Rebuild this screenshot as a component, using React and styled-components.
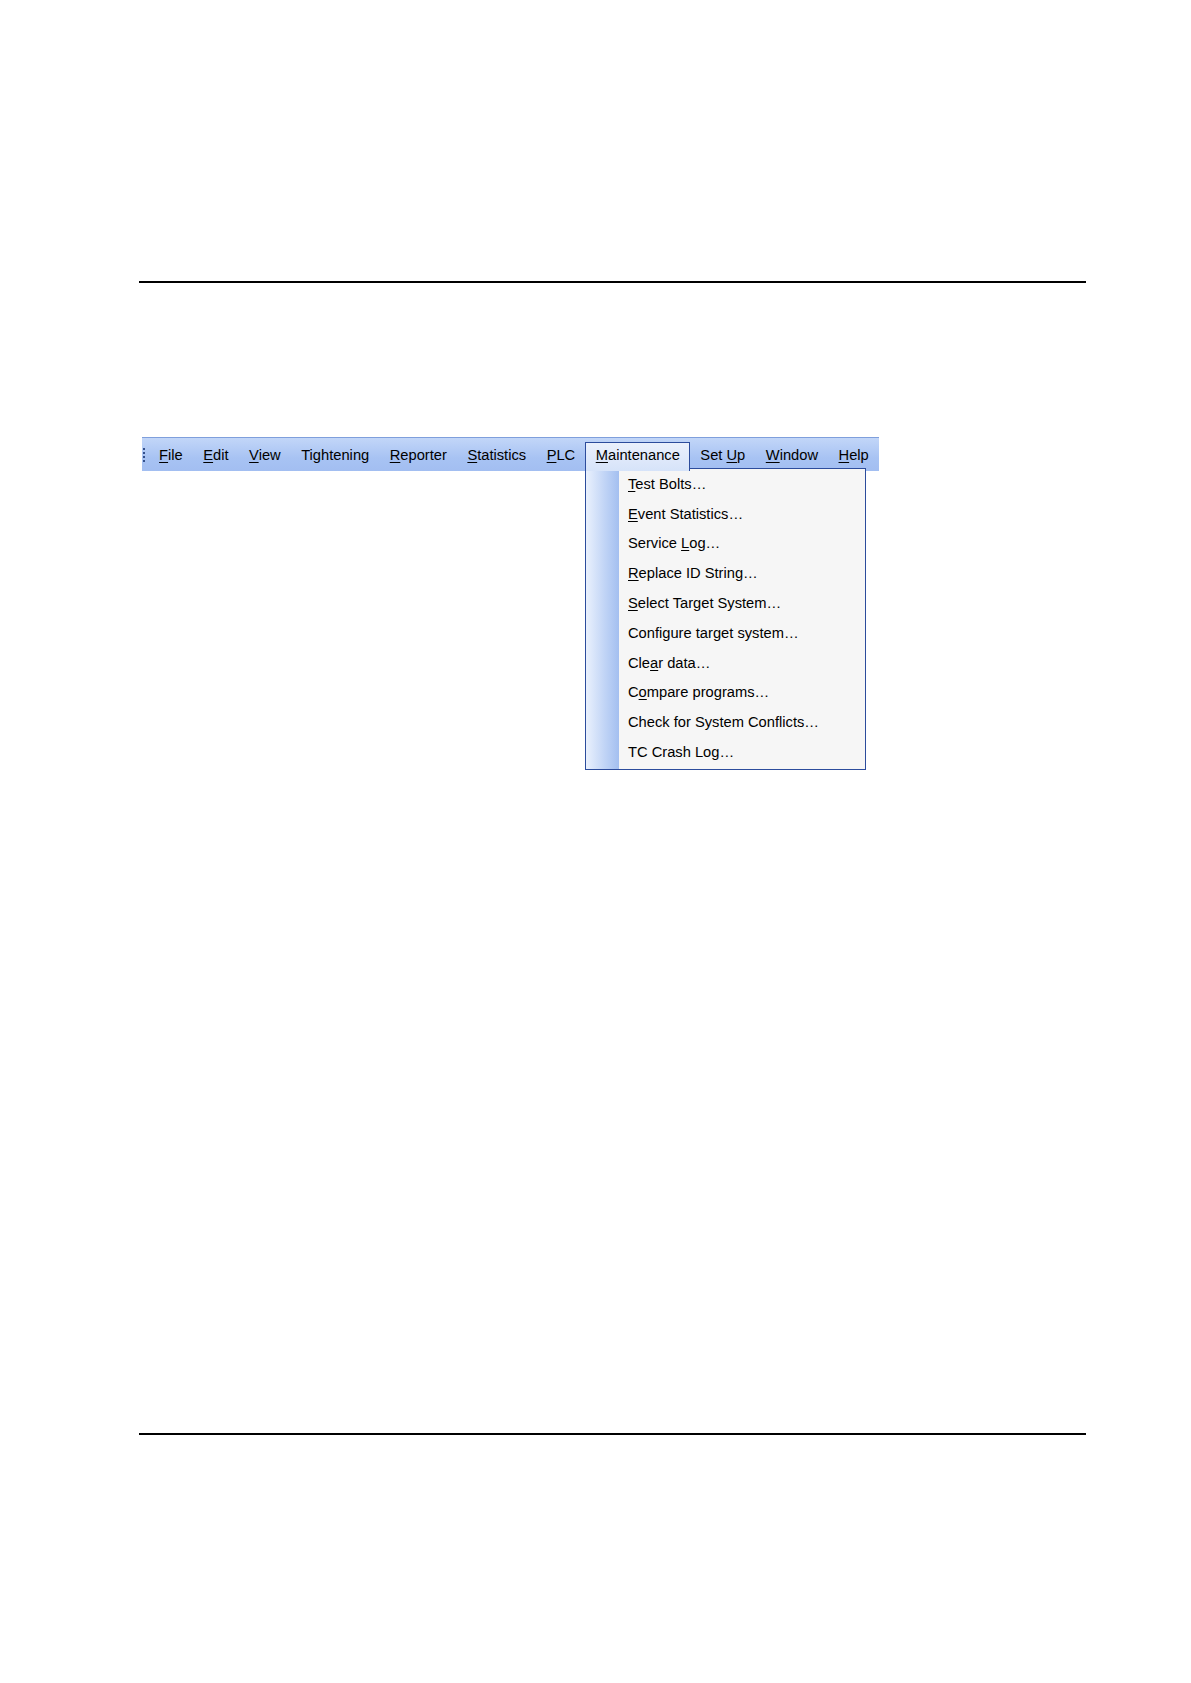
import React from "react";
import styled, { createGlobalStyle } from "styled-components";

const GlobalStyle = createGlobalStyle`
  html, body {
    margin: 0;
    padding: 0;
    background: #ffffff;
  }
  body {
    font-family: "Liberation Sans", Arial, sans-serif;
    color: #000;
  }
`;

const Page = styled.div`
  width: 1191px;
  height: 1683px;
  box-sizing: border-box;
  padding: 281px 105px 0 139px;
  display: flex;
  flex-direction: column;
`;

const Rule = styled.div`
  height: 2px;
  background: #000;
  margin-top: ${(p) => p.$top || 0}px;
`;

const Figure = styled.div`
  position: relative;
  margin-top: 154px;
  margin-left: 3px;
  width: 737px;
`;

const MenuBar = styled.div`
  height: 33px;
  display: flex;
  align-items: stretch;
  border-top: 1px solid #7f9fdc;
  background: linear-gradient(#c2d6f8, #a8c3f3 60%, #a2bef1);
  font-size: 14.7px;
`;

const Grip = styled.div`
  width: 10px;
  display: flex;
  flex-direction: column;
  justify-content: center;
  gap: 2px;
  padding-left: 1px;
  box-sizing: border-box;

  span {
    width: 2px;
    height: 2px;
    background: #34508c;
  }
`;

const BarItem = styled.div`
  display: flex;
  align-items: center;
  padding: 0 9.25px 4px;
  margin-top: 4px;
  box-sizing: border-box;
  border: 1px solid ${(p) => (p.$open ? "#2c4c9c" : "transparent")};
  border-bottom: none;
  background: ${(p) =>
    p.$open ? "linear-gradient(#eaf0fc, #d6e3f9)" : "transparent"};
  position: relative;
  z-index: 2;
  white-space: nowrap;
`;

const Key = styled.span`
  text-decoration: underline;
  text-underline-offset: 2px;
  text-decoration-thickness: 1px;
`;

const Dropdown = styled.div`
  position: absolute;
  left: 443px;
  top: 31px;
  width: 281px;
  box-sizing: border-box;
  border: 1px solid #2c4c9c;
  background: #f6f6f6;
  display: flex;
  font-size: 14.7px;
  z-index: 1;
`;

const Gutter = styled.div`
  width: 33px;
  background: linear-gradient(to right, #eaf1fd, #c2d5f6 55%, #a3bff0);
`;

const ItemList = styled.div`
  flex: 1;
  display: flex;
  flex-direction: column;
  padding-bottom: 2px;
`;

const Item = styled.div`
  height: 29.8px;
  display: flex;
  align-items: center;
  padding-left: 9px;
  white-space: nowrap;
`;

const label = (text, idx) => {
  if (idx === undefined || idx < 0) return <span>{text}</span>;
  return (
    <span>
      {text.slice(0, idx)}
      <Key>{text[idx]}</Key>
      {text.slice(idx + 1)}
    </span>
  );
};

const barItems = [
  { t: "File", k: 0 },
  { t: "Edit", k: 0 },
  { t: "View", k: 0 },
  { t: "Tightening", k: -1 },
  { t: "Reporter", k: 0 },
  { t: "Statistics", k: 0 },
  { t: "PLC", k: 0 },
  { t: "Maintenance", k: 0, open: true },
  { t: "Set Up", k: 4 },
  { t: "Window", k: 0 },
  { t: "Help", k: 0 },
];

const menuItems = [
  { t: "Test Bolts…", k: 0 },
  { t: "Event Statistics…", k: 0 },
  { t: "Service Log…", k: 8 },
  { t: "Replace ID String…", k: 0 },
  { t: "Select Target System…", k: 0 },
  { t: "Configure target system…", k: -1 },
  { t: "Clear data…", k: 3 },
  { t: "Compare programs…", k: 1 },
  { t: "Check for System Conflicts…", k: -1 },
  { t: "TC Crash Log…", k: -1 },
];

export default function App() {
  return (
    <>
      <GlobalStyle />
      <Page>
        <Rule />
        <Figure>
          <MenuBar>
            <Grip>
              <span />
              <span />
              <span />
              <span />
            </Grip>
            {barItems.map((b, i) => (
              <BarItem key={i} $open={b.open}>
                {label(b.t, b.k)}
              </BarItem>
            ))}
          </MenuBar>
          <Dropdown>
            <Gutter />
            <ItemList>
              {menuItems.map((m, i) => (
                <Item key={i}>{label(m.t, m.k)}</Item>
              ))}
            </ItemList>
          </Dropdown>
        </Figure>
        <Rule $top={962} />
      </Page>
    </>
  );
}
